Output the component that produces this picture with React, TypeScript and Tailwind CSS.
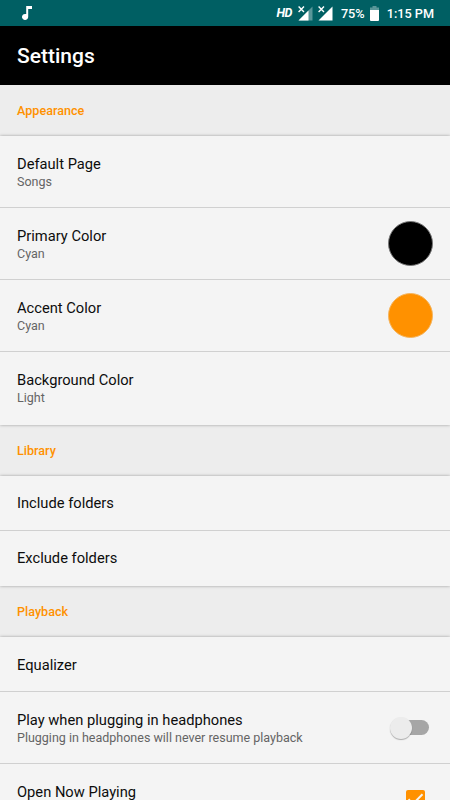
import clsx from "clsx";
import type { ReactNode } from "react";

type Item = {
  title: string;
  subtitle?: string;
  className: string;
  control?: ReactNode;
};

type Section = {
  label: string;
  items: Item[];
};

function ColorDot({ className }: { className: string }) {
  return <span className={clsx("size-[45px] rounded-full border", className)} />;
}

function Toggle() {
  return (
    <span className="mr-1 flex h-[15px] w-[35px] items-center rounded-full bg-[#a6a6a6]">
      <span className="-ml-[4px] size-[22px] shrink-0 rounded-full bg-[#ececec] shadow-[0_1px_1px_rgba(0,0,0,0.3)]" />
    </span>
  );
}

function Checkbox() {
  return (
    <svg viewBox="0 0 19 19" className="mt-[9px] mr-[8px] size-[19px]">
      <rect width="19" height="19" rx="2" fill="#ff9100" />
      <path d="M2.5 9.3 7 13.8 16.5 4.3" fill="none" stroke="#f4f4f4" strokeWidth="2" />
    </svg>
  );
}

const sections: Section[] = [
  {
    label: "Appearance",
    items: [
      { title: "Default Page", subtitle: "Songs", className: "h-[72px] items-center" },
      {
        title: "Primary Color",
        subtitle: "Cyan",
        className: "h-[72px] items-center",
        control: <ColorDot className="border-[#777] bg-black" />,
      },
      {
        title: "Accent Color",
        subtitle: "Cyan",
        className: "h-[72px] items-center",
        control: <ColorDot className="border-[#f5b45c] bg-[#ff9100]" />,
      },
      { title: "Background Color", subtitle: "Light", className: "h-[73px] items-center pb-[2px]" },
    ],
  },
  {
    label: "Library",
    items: [
      { title: "Include folders", className: "h-[55px] items-center pb-[2px]" },
      { title: "Exclude folders", className: "h-[55px] items-center pb-[3px]" },
    ],
  },
  {
    label: "Playback",
    items: [
      { title: "Equalizer", className: "h-[55px] items-center" },
      {
        title: "Play when plugging in headphones",
        subtitle: "Plugging in headphones will never resume playback",
        className: "h-[72px] items-center",
        control: <Toggle />,
      },
      {
        title: "Open Now Playing",
        className: "h-[72px] items-start pt-[17px]",
        control: <Checkbox />,
      },
    ],
  },
];

function SignalIcon({ faded }: { faded?: boolean }) {
  return (
    <svg viewBox="0 0 15 15" className="size-[15px]">
      <path d="M14.5 0.5V14.5H0.5Z" fill="#fff" fillOpacity={faded ? 0.35 : 1} />
      {faded && <path d="M10.5 4.5V14.5H0.5Z" fill="#fff" />}
      <path d="M0 0H7V5L5 7H0Z" fill="#005f63" />
      <path d="M0.6 0.6 6 6M6 0.6 0.6 6" stroke="#fff" strokeWidth="1.4" />
    </svg>
  );
}

function StatusBar() {
  return (
    <div className="flex h-[26px] items-center bg-[#005f63] pr-[16px] pl-[22px] text-[12.7px] font-medium text-white">
      <svg viewBox="0 0 10 14" className="h-[14px] w-[10px]">
        <path d="M4.2 0H10V3H6.2V11A3.1 3 0 1 1 4.2 8.1Z" fill="#fff" />
      </svg>
      <span className="ml-auto pt-px text-[12.5px] font-bold tracking-[-0.5px] italic">HD</span>
      <div className="ml-[6px] flex gap-[5px]">
        <SignalIcon faded />
        <SignalIcon />
      </div>
      <span className="ml-[8px] pt-px">75%</span>
      <svg viewBox="0 0 9 15" className="ml-[5px] h-[15px] w-[9px]">
        <path d="M2.5 0H6.5V1.5H9V4H0V1.5H2.5Z" fill="#fff" fillOpacity="0.35" />
        <path d="M0 4H9V14a1 1 0 0 1-1 1H1a1 1 0 0 1-1-1Z" fill="#fff" />
      </svg>
      <span className="ml-[8px] pt-px">1:15 PM</span>
    </div>
  );
}

function Row({ item }: { item: Item }) {
  return (
    <div className={clsx("flex justify-between border-b border-[#d0d0d0] px-[17px] last:border-b-0", item.className)}>
      <div className="pt-[2px]">
        <div className="text-[14.7px] leading-[18px] text-[#0d0d0d]">{item.title}</div>
        {item.subtitle && (
          <div className="text-[12.5px] leading-[18px] text-[#646464]">{item.subtitle}</div>
        )}
      </div>
      {item.control}
    </div>
  );
}

export default function App() {
  return (
    <div className="h-[800px] w-[450px] overflow-hidden bg-[#ededed] font-['Roboto',sans-serif]">
      <StatusBar />
      <header className="flex h-[59px] items-center bg-black px-[17px] pt-[2px]">
        <h1 className="text-[21px] font-medium text-white">Settings</h1>
      </header>
      {sections.map((section) => (
        <section key={section.label}>
          <h2 className="flex h-[51px] items-center px-[17px] pt-px text-[12.6px] font-medium text-[#ff9100]">
            {section.label}
          </h2>
          <div className="bg-[#f4f4f4] shadow-[0_0_3px_rgba(0,0,0,0.35)]">
            {section.items.map((item) => (
              <Row key={item.title} item={item} />
            ))}
          </div>
        </section>
      ))}
    </div>
  );
}
